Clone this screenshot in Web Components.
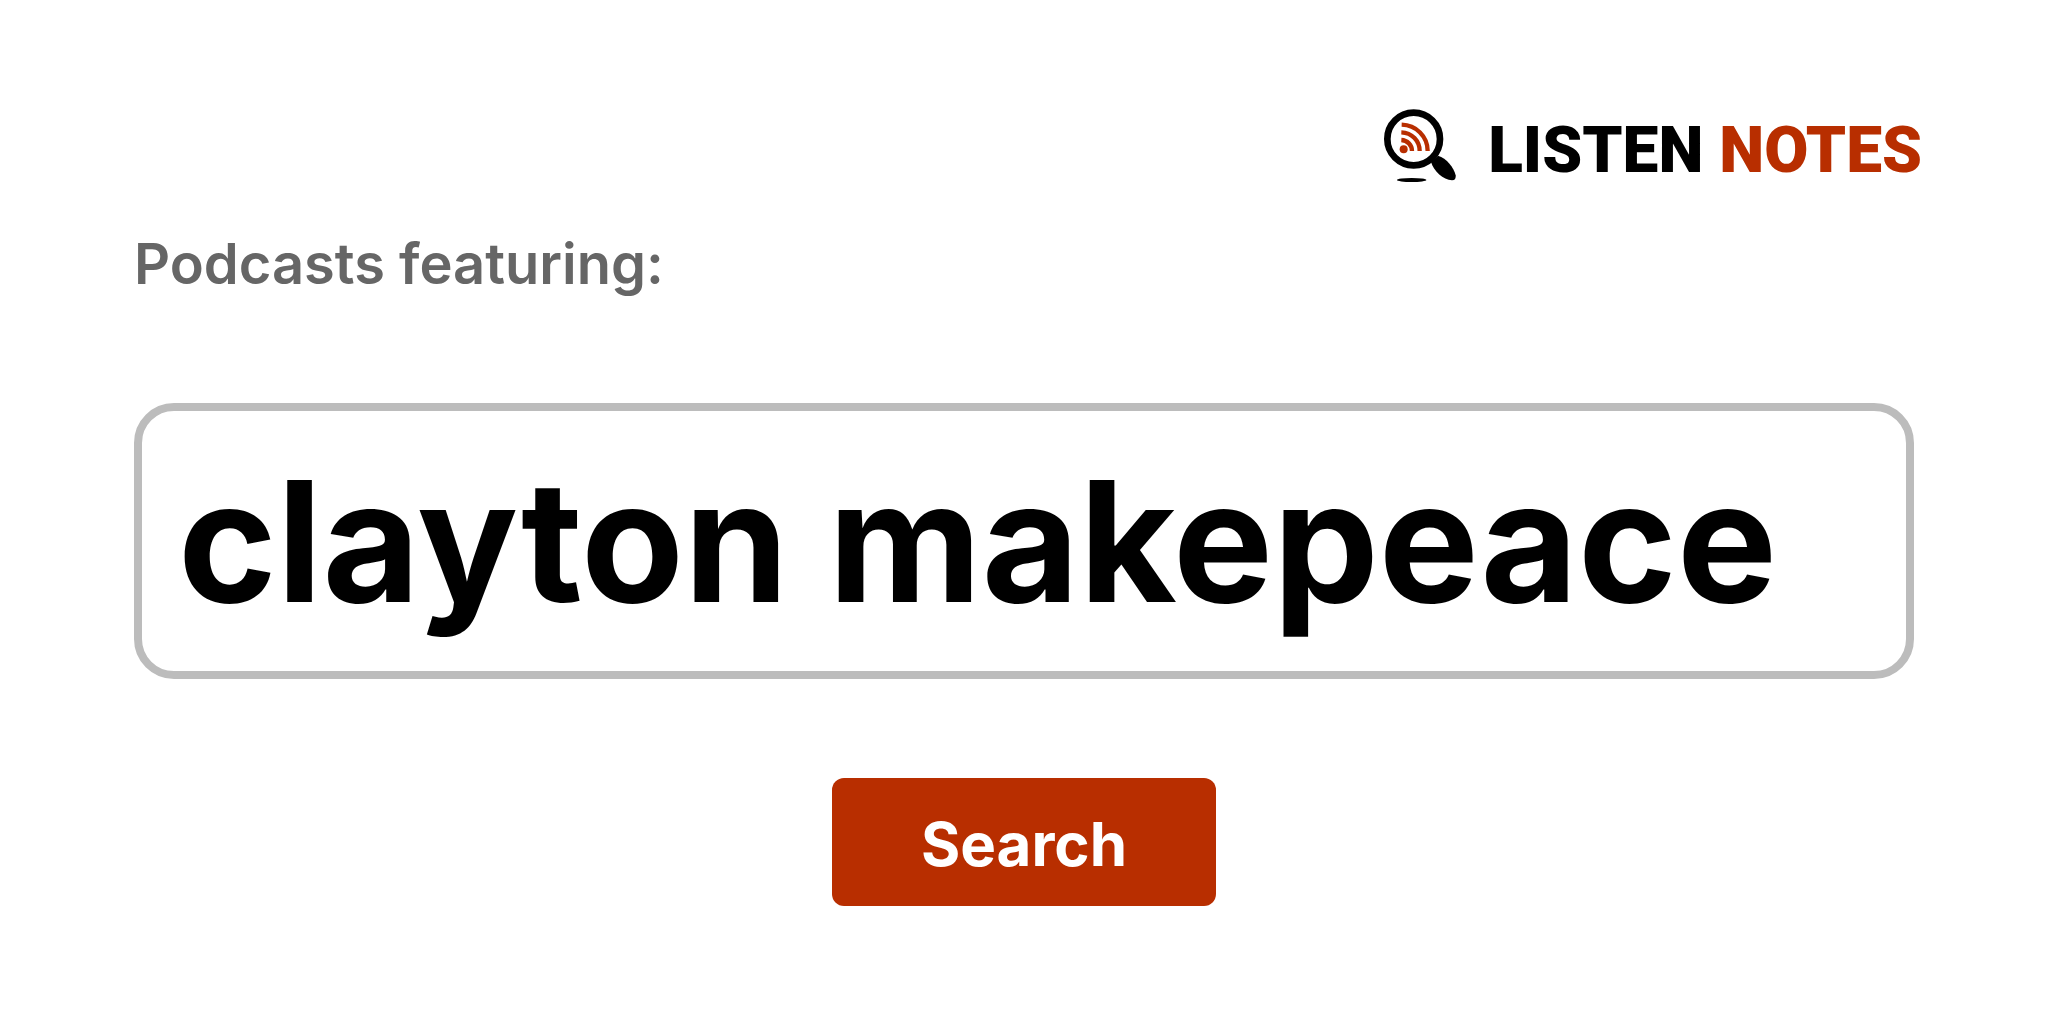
<!DOCTYPE html>
<html lang="en">
<head>
  <meta charset="utf-8">
  <meta name="viewport" content="width=device-width, initial-scale=1">
  <title>Listen Notes</title>
  <style>
    body {
      margin: 0;
      background-color: #ffffff;
      font-family: Inter, "Liberation Sans", sans-serif;
    }
  </style>
</head>
<body>
  <search-card>
    <brand-logo slot="brand">LISTEN <span slot="accent">NOTES</span></brand-logo>
    <search-form label="Podcasts featuring:" value="clayton makepeace">Search</search-form>
  </search-card>

  <script>
    class BrandLogo extends HTMLElement {
      constructor() {
        super();
        this.shadowDOM = this.attachShadow({ mode: "open" });
      }

      connectedCallback() {
        this.shadowDOM.innerHTML = `
          <style>
            :host {
              display: block;
            }

            a {
              display: flex;
              align-items: flex-start;
              gap: 32px;
              color: #000000;
              font-family: Roboto, "Liberation Sans", sans-serif;
              font-size: 64px;
              font-weight: 900;
              line-height: 84px;
              text-decoration: none;
              white-space: pre;
            }

            svg {
              width: 72px;
              height: 72px;
              overflow: visible;
            }

            ::slotted(span) {
              color: #b82e00;
            }
          </style>

          <a href="#">
            <svg viewBox="42 42 216 216" aria-hidden="true">
              <circle cx="131" cy="132" r="79" fill="none" stroke="#000" stroke-width="20"/>
              <path d="M183 201 L204 182 C230 190 252 218 257 241 Q259 256 246 256 C219 254 192 230 183 201Z"/>
              <ellipse cx="125" cy="255" rx="44" ry="6"/>
              <g fill="none" stroke="#b82e00" stroke-width="13">
                <path d="M95 89 C138 90 173 124 173 168"/>
                <path d="M94 112 C126 113 149 138 149 168"/>
                <path d="M94 135 C112 136 126 150 126 168"/>
              </g>
              <circle cx="101" cy="163" r="12" fill="#b82e00"/>
            </svg>
            <span><slot></slot><slot name="accent"></slot></span>
          </a>
        `;
      }
    }

    class SearchForm extends HTMLElement {
      constructor() {
        super();
        this.shadowDOM = this.attachShadow({ mode: "open" });
      }

      connectedCallback() {
        this.shadowDOM.innerHTML = `
          <style>
            :host {
              display: block;
            }

            form {
              display: flex;
              flex-direction: column;
              margin: 0;
              padding: 0 8px;
            }

            label {
              color: #666666;
              font-size: 56px;
              font-weight: 600;
              line-height: 72px;
            }

            input {
              box-sizing: border-box;
              width: 100%;
              margin: 103px 0 99px;
              padding: 30px 36px;
              border: 8px solid #bcbcbc;
              border-radius: 40px;
              outline: none;
              background-color: #ffffff;
              color: #000000;
              font-family: inherit;
              font-size: 168px;
              font-weight: 700;
              line-height: 200px;
            }

            button {
              align-self: center;
              padding: 30px 89px 26px;
              border: 0;
              border-radius: 12px;
              background-color: #b82e00;
              color: #ffffff;
              font-family: inherit;
              font-size: 60px;
              font-weight: 700;
              line-height: 72px;
              cursor: pointer;
            }
          </style>

          <form>
            <label for="query"></label>
            <input id="query" type="text" autocomplete="off" spellcheck="false">
            <button type="submit"><slot></slot></button>
          </form>
        `;

        this.shadowDOM.querySelector("label").textContent = this.getAttribute("label");
        this.shadowDOM.querySelector("input").value = this.getAttribute("value");
        this.shadowDOM
          .querySelector("form")
          .addEventListener("submit", (event) => event.preventDefault());
      }
    }

    class SearchCard extends HTMLElement {
      constructor() {
        super();
        this.shadowDOM = this.attachShadow({ mode: "open" });
      }

      connectedCallback() {
        this.shadowDOM.innerHTML = `
          <style>
            :host {
              display: block;
              padding: 109px 126px 64px;
            }

            header {
              display: flex;
              justify-content: flex-end;
              margin-bottom: 35px;
            }
          </style>

          <header><slot name="brand"></slot></header>
          <main><slot></slot></main>
        `;
      }
    }

    customElements.define("brand-logo", BrandLogo);
    customElements.define("search-form", SearchForm);
    customElements.define("search-card", SearchCard);
  </script>
</body>
</html>
